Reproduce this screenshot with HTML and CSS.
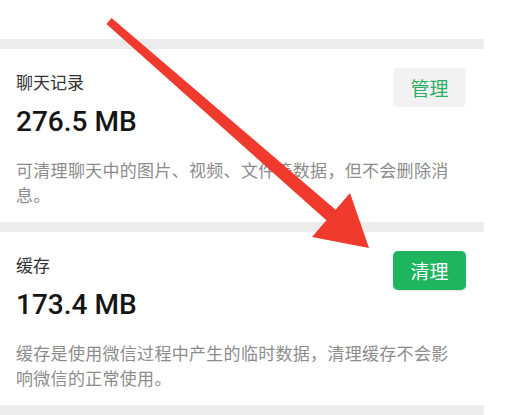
FILE: index.html
```html
<!DOCTYPE html>
<html lang="zh-CN">
<head>
<meta charset="utf-8">
<title>存储空间</title>
<link rel="stylesheet" href="styles.css">
</head>
<body>
<div class="page">
  <div class="top"></div>
  <div class="sep"></div>
  <section class="item">
    <div class="head">
      <div class="info">
        <div class="label">聊天记录</div>
        <div class="amount">276.5 MB</div>
      </div>
      <button class="btn btn-light">管理</button>
    </div>
    <p class="desc">可清理聊天中的图片、视频、文件等数据，但不会删除消息。</p>
  </section>
  <div class="sep"></div>
  <section class="item">
    <div class="head">
      <div class="info">
        <div class="label">缓存</div>
        <div class="amount">173.4 MB</div>
      </div>
      <button class="btn btn-green">清理</button>
    </div>
    <p class="desc">缓存是使用微信过程中产生的临时数据，清理缓存不会影响微信的正常使用。</p>
  </section>
  <div class="sep sep-last"></div>
</div>
<svg class="arrow" width="525" height="415" viewBox="0 0 525 415" xmlns="http://www.w3.org/2000/svg">
  <polygon points="111.6,18 335.6,209.7 350,193 369,248 312,237 326.4,220.3 106.4,24" fill="#ef3a2d"/>
</svg>
</body>
</html>
```

FILE: styles.css
```css
html, body {
  margin: 0;
  padding: 0;
  background: #ffffff;
}

body {
  width: 525px;
  height: 415px;
  overflow: hidden;
  position: relative;
  font-family: "Noto Sans CJK SC", "Noto Sans", sans-serif;
}

.page {
  width: 484px;
}

.top {
  height: 39px;
  background: #ffffff;
}

.sep {
  height: 10px;
  background: #ececec;
}

.sep-last {
  height: 11px;
}

.item {
  box-sizing: border-box;
  height: 173px;
  padding: 19px 18px 0 16px;
  background: #ffffff;
}

.head {
  display: flex;
  justify-content: space-between;
  align-items: flex-start;
}

.info {
  display: flex;
  flex-direction: column;
}

.label {
  margin-top: 3px;
  font-size: 17px;
  line-height: 22px;
  color: #333333;
}

.amount {
  margin-top: 12px;
  font-family: Roboto, "Noto Sans", sans-serif;
  font-weight: 500;
  font-size: 28px;
  line-height: 34px;
  color: #151515;
}

.btn {
  width: 73px;
  height: 39px;
  border: none;
  border-radius: 5px;
  font-family: "Noto Sans CJK SC", sans-serif;
  font-size: 19px;
  padding: 0;
}

.btn-light {
  background: #f2f2f2;
  color: #2bae67;
}

.btn-green {
  background: #1fb55f;
  color: #ffffff;
  box-shadow: 0 1px 2px rgba(0, 0, 0, 0.12);
}

.desc {
  margin: 18px 4px 0 0;
  font-size: 17px;
  line-height: 25px;
  letter-spacing: 0.3px;
  color: #8c8c8c;
}

.arrow {
  position: absolute;
  top: 0;
  left: 0;
  pointer-events: none;
}
```
